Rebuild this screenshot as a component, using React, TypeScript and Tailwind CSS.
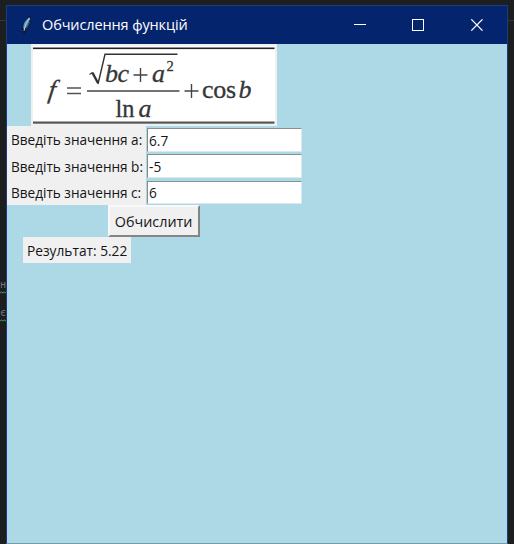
import React from "react";

const UI_FONT = "font-['Open_Sans','Noto_Sans',sans-serif]";

function Feather() {
  return (
    <svg className="h-[20px] w-[12px]" viewBox="0 0 12 20">
      <path d="M2.5 18.5 L2 15.5 C0.2 11 3 4 9.5 1 C11 6 8.5 12.5 4.5 15.5 L3.5 18.5Z" fill="#10131c" />
      <path d="M2.4 13.8 C1.6 9 4.5 4 9 2.2 C9.8 7 7.6 12 4.2 14.4Z" fill="#5593c6" />
      <path d="M8.6 3 C6 6 4 10 3 16" fill="none" stroke="#c6d3df" strokeWidth="0.9" />
      <path d="M9 5 C8 9 6.5 11.5 4.2 14" fill="none" stroke="#1c3047" strokeWidth="1" />
    </svg>
  );
}

function Formula() {
  return (
    <svg
      className="ml-6 block h-[82px] w-[246px] font-['Liberation_Serif',serif]"
      viewBox="31 44 246 82"
      fill="#363636"
    >
      <rect x="31" y="44" width="246" height="82" fill="#f0f0f0" />
      <rect x="33" y="46" width="242" height="78" fill="#ffffff" />
      <rect x="33" y="47.5" width="241.5" height="1.6" fill="#222222" />
      <rect x="33" y="121.5" width="241.5" height="2.2" fill="#555555" />
      <text transform="translate(47.5 97.5) skewX(-8)" fontSize="26" fontStyle="italic" stroke="#363636" strokeWidth="0.3">f</text>
      <path d="M67 88H81M67 93.5H81" stroke="#555555" strokeWidth="1.3" />
      <path d="M87 91H179.5" stroke="#444444" strokeWidth="1.3" />
      <path d="M89.5 74.5L92.5 72.5" fill="none" stroke="#333333" strokeWidth="1.2" />
      <path d="M92.3 72.5L98 83" stroke="#333333" strokeWidth="2.4" />
      <path d="M98 84L105 54.3H177.5" fill="none" stroke="#333333" strokeWidth="1.4" />
      <g stroke="#363636" strokeWidth="0.3">
        <text x="105" y="81.5" fontSize="26" fontStyle="italic" textLength="24">bc</text>
        <text x="152" y="81.5" fontSize="26" fontStyle="italic">a</text>
        <text x="166.5" y="71" fontSize="14.5">2</text>
        <text x="115.5" y="116.5" fontSize="26" textLength="19" lengthAdjust="spacingAndGlyphs">ln</text>
        <text x="138.5" y="116.5" fontSize="26" fontStyle="italic">a</text>
        <text x="202" y="97.5" fontSize="26" textLength="34">cos</text>
        <text x="238.5" y="97.5" fontSize="26" fontStyle="italic">b</text>
      </g>
      <path d="M133.5 75H147.5M140.5 68V82" stroke="#444444" strokeWidth="1.4" />
      <path d="M184.5 91H198.5M191.5 84V98" stroke="#444444" strokeWidth="1.4" />
    </svg>
  );
}

function Squiggle() {
  return (
    <svg className="block h-[3px] w-1.5" viewBox="0 0 6 3" fill="none" stroke="#4f9a59">
      <path d="M0 2L1.5 1L3 2L4.5 1L6 2" />
    </svg>
  );
}

const FIELDS = [
  { name: "a", value: "6.7" },
  { name: "b", value: "-5" },
  { name: "c", value: "6" },
];

export default function App() {
  return (
    <div className={`h-[544px] w-[514px] overflow-hidden bg-[#1d1e20] pt-[5px] ${UI_FONT}`}>
      <div className="flex h-[539px]">
        <div className="w-1.5 shrink-0 font-['DejaVu_Sans_Mono',monospace] text-[10px] leading-3 text-[#77787a]">
          <div className="mt-[15px] h-px bg-[#35363a]" />
          <div className="mt-[258px] h-7">
            <div>н</div>
            <Squiggle />
          </div>
          <div className="h-7">
            <div>є</div>
            <Squiggle />
          </div>
        </div>
        <main className="flex w-[502px] shrink-0 flex-col border border-[#1c3a7c] border-b-[#789bab] bg-[#add8e6] text-[15px] text-[#151515]">
          <header className="flex h-[38px] shrink-0 items-center bg-[#05246e] text-white">
            <div className="ml-[14px] mt-[-1px]"><Feather /></div>
            <h1 className="ml-[9px] whitespace-nowrap text-[14.5px] tracking-[-0.12px]">Обчислення функцій</h1>
            <svg className="ml-auto mr-6 h-3 w-[129px]" viewBox="0 0 129 12" fill="none" stroke="white">
              <path d="M0 5.5H12" />
              <rect x="58.5" y="0.5" width="11" height="11" />
              <path d="M117.3 0.3L128.5 11.7M128.5 0.3L117.3 11.7" strokeWidth="1.2" />
            </svg>
          </header>
          <Formula />
          {FIELDS.map((field) => (
            <div key={field.name} className="flex h-[26.25px] shrink-0">
              <label className="flex w-[139px] items-center whitespace-nowrap bg-[#f0f0f0] pl-1 pt-px">
                <span className="inline-block origin-left scale-x-[0.905]">{`Введіть значення ${field.name}:`}</span>
              </label>
              <div className="ml-px mt-[2px] flex h-[23.5px] w-[155px] items-center border border-b-[#d9e9ee] border-l-[#85898b] border-r-[#d9e9ee] border-t-[#8b8f91] bg-white pl-px">
                <span className="inline-block origin-left scale-x-[0.91]">{field.value}</span>
              </div>
            </div>
          ))}
          <button className="ml-[101px] flex h-8 w-[92px] shrink-0 items-center justify-center whitespace-nowrap border-2 border-b-[#858585] border-l-[#f8f8f8] border-r-[#858585] border-t-[#f8f8f8] bg-[#f0f0f0] pt-px">
            <span className="inline-block scale-x-[0.957]">Обчислити</span>
          </button>
          <div className="ml-4 flex h-[26px] w-[108px] shrink-0 items-center whitespace-nowrap bg-[#f0f0f0] pl-1 pt-px">
            <span className="inline-block origin-left scale-x-[0.915]">Результат: 5.22</span>
          </div>
        </main>
        <div className="flex-1">
          <div className="mt-[15px] h-px bg-[#35363a]" />
        </div>
      </div>
    </div>
  );
}
